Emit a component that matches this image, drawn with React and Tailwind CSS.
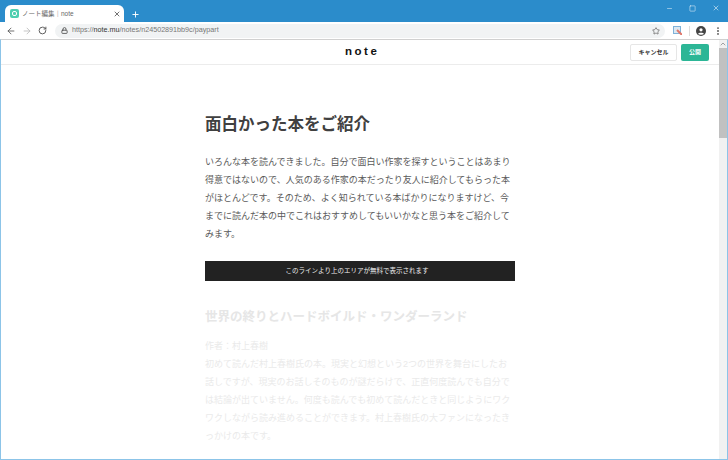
import { ArrowLeft, ArrowRight, RotateCw, Lock, Star, X, Plus, Minus, Square, EllipsisVertical, ChevronUp } from 'lucide-react';

const jp = { fontFamily: '"Liberation Sans", "Noto Sans CJK JP", sans-serif' };

function TitleBar() {
  return (
    <div className="flex h-[22px] items-end bg-[#2b8ccb] pl-[5px]">
      <div className="flex h-[17px] w-[119px] items-center rounded-t-md bg-white pl-[5px] pr-[3px]">
        <div className="flex h-[9px] w-[9px] items-center justify-center rounded-[2px] bg-[#4fcfb0]">
          <div className="h-[5px] w-[5px] rounded-[2px] border border-white" />
        </div>
        <span className="ml-[3px] flex-1 text-[6.5px] text-[#666]">ノート編集｜note</span>
        <X size={8} strokeWidth={2.5} className="text-[#555]" />
      </div>
      <Plus size={9} strokeWidth={2.5} className="mb-[3px] ml-[7px] text-white" />
      <div className="mb-[10px] ml-auto flex items-center gap-[16px] pr-[8px] text-white/80">
        <Minus size={7} strokeWidth={2} />
        <Square size={7} strokeWidth={2} />
        <X size={8} strokeWidth={2} />
      </div>
    </div>
  );
}

function AddressBar() {
  return (
    <div className="flex h-[17px] items-center bg-white">
      <div className="flex w-[55px] items-center gap-[6px] pl-[6px] text-[#555]">
        <ArrowLeft size={10} strokeWidth={2} />
        <ArrowRight size={10} strokeWidth={2} className="text-[#bbb]" />
        <RotateCw size={9} strokeWidth={2.5} />
      </div>
      <div className="flex h-[14px] w-[610px] items-center rounded-full bg-[#f1f3f4] pl-[6px] pr-[5px]">
        <Lock size={7} strokeWidth={3} className="text-[#555]" />
        <span className="ml-[4px] flex-1 text-[7.2px] text-[#777]">
          https://<span className="text-[#333]">note.mu</span>/notes/n24502891bb9c/paypart
        </span>
        <Star size={8} strokeWidth={2} className="text-[#555]" />
      </div>
      <div className="ml-[8px] flex items-center">
        <svg width="9" height="9" viewBox="0 0 9 9">
          <rect x="0.5" y="0.5" width="7" height="7" fill="#dbe8f2" stroke="#7fb2d9" />
          <path d="M4 4L9 9" stroke="#e0766a" strokeWidth="2" />
        </svg>
        <div className="ml-[7px] mr-[6px] h-[10px] w-px bg-[#ddd]" />
        <svg width="10" height="10" viewBox="0 0 10 10">
          <circle cx="5" cy="5" r="5" fill="#444" />
          <circle cx="5" cy="3.8" r="1.6" fill="#fff" />
          <path d="M2 8C2.6 6.4 7.4 6.4 8 8C6.6 9 3.4 9 2 8Z" fill="#fff" />
        </svg>
        <EllipsisVertical size={10} strokeWidth={2.5} className="ml-[7px] text-[#555]" />
      </div>
    </div>
  );
}

function NoteHeader() {
  return (
    <div className="flex h-[25px] shrink-0 items-center border-b border-[#ececec] pr-[10px]">
      <div className="mb-[1px] ml-[344px] flex-1 text-[11.5px] font-bold tracking-[2.5px] text-[#111]">note</div>
      <div className="flex h-[17px] w-[47px] items-center justify-center rounded-[2px] border border-[#e6e6e6] text-[6px] font-bold text-[#333]">
        キャンセル
      </div>
      <div className="ml-[4px] flex h-[17px] w-[28px] items-center justify-center rounded-[2px] bg-[#2cb696] text-[6px] font-bold text-white">
        公開
      </div>
    </div>
  );
}

function Article() {
  return (
    <div className="flex-1 overflow-hidden">
      <div className="ml-[204px] w-[310px]">
        <h1 className="mt-[48px] text-[16.5px] font-bold leading-[22px] text-[#404040]">面白かった本をご紹介</h1>
        <p className="mt-[18px] text-[9px] leading-[18px] text-[#5a5a5a]">
          いろんな本を読んできました。自分で面白い作家を探すということはあまり得意ではないので、人気のある作家の本だったり友人に紹介してもらった本がほとんどです。そのため、よく知られている本ばかりになりますけど、今までに読んだ本の中でこれはおすすめしてもいいかなと思う本をご紹介してみます。
        </p>
        <div className="mt-[18px] flex h-[20px] items-center justify-center bg-[#222] pr-[6px] text-[6.5px] text-[#eee]">
          このラインより上のエリアが無料で表示されます
        </div>
        <h2 className="mt-[26px] text-[12.5px] font-bold leading-[20px] text-[#e6e6e6]">世界の終りとハードボイルド・ワンダーランド</h2>
        <p className="mt-[10px] text-[9px] leading-[18px] text-[#eaeaea]">
          作者：村上春樹
          <br />
          初めて読んだ村上春樹氏の本。現実と幻想という2つの世界を舞台にしたお話しですが、現実のお話しそのものが謎だらけで、正直何度読んでも自分では結論が出ていません。何度も読んでも初めて読んだときと同じようにワクワクしながら読み進めることができます。村上春樹氏の大ファンになったきっかけの本です。
        </p>
      </div>
    </div>
  );
}

export default function App() {
  return (
    <div className="flex h-[460px] w-[728px] flex-col overflow-hidden bg-white" style={jp}>
      <TitleBar />
      <AddressBar />
      <div className="flex min-h-0 flex-1 border-x border-b border-x-[#8cc4e8] border-b-[#8cc4e8] border-t border-t-[#d0d0d0]">
        <div className="flex min-w-0 flex-1 flex-col">
          <NoteHeader />
          <Article />
        </div>
        <div className="flex w-[8px] flex-col bg-[#f1f1f1]">
          <ChevronUp size={8} strokeWidth={2} className="text-[#777]" />
          <div className="h-[90px] bg-[#c1c1c1]" />
        </div>
      </div>
    </div>
  );
}
